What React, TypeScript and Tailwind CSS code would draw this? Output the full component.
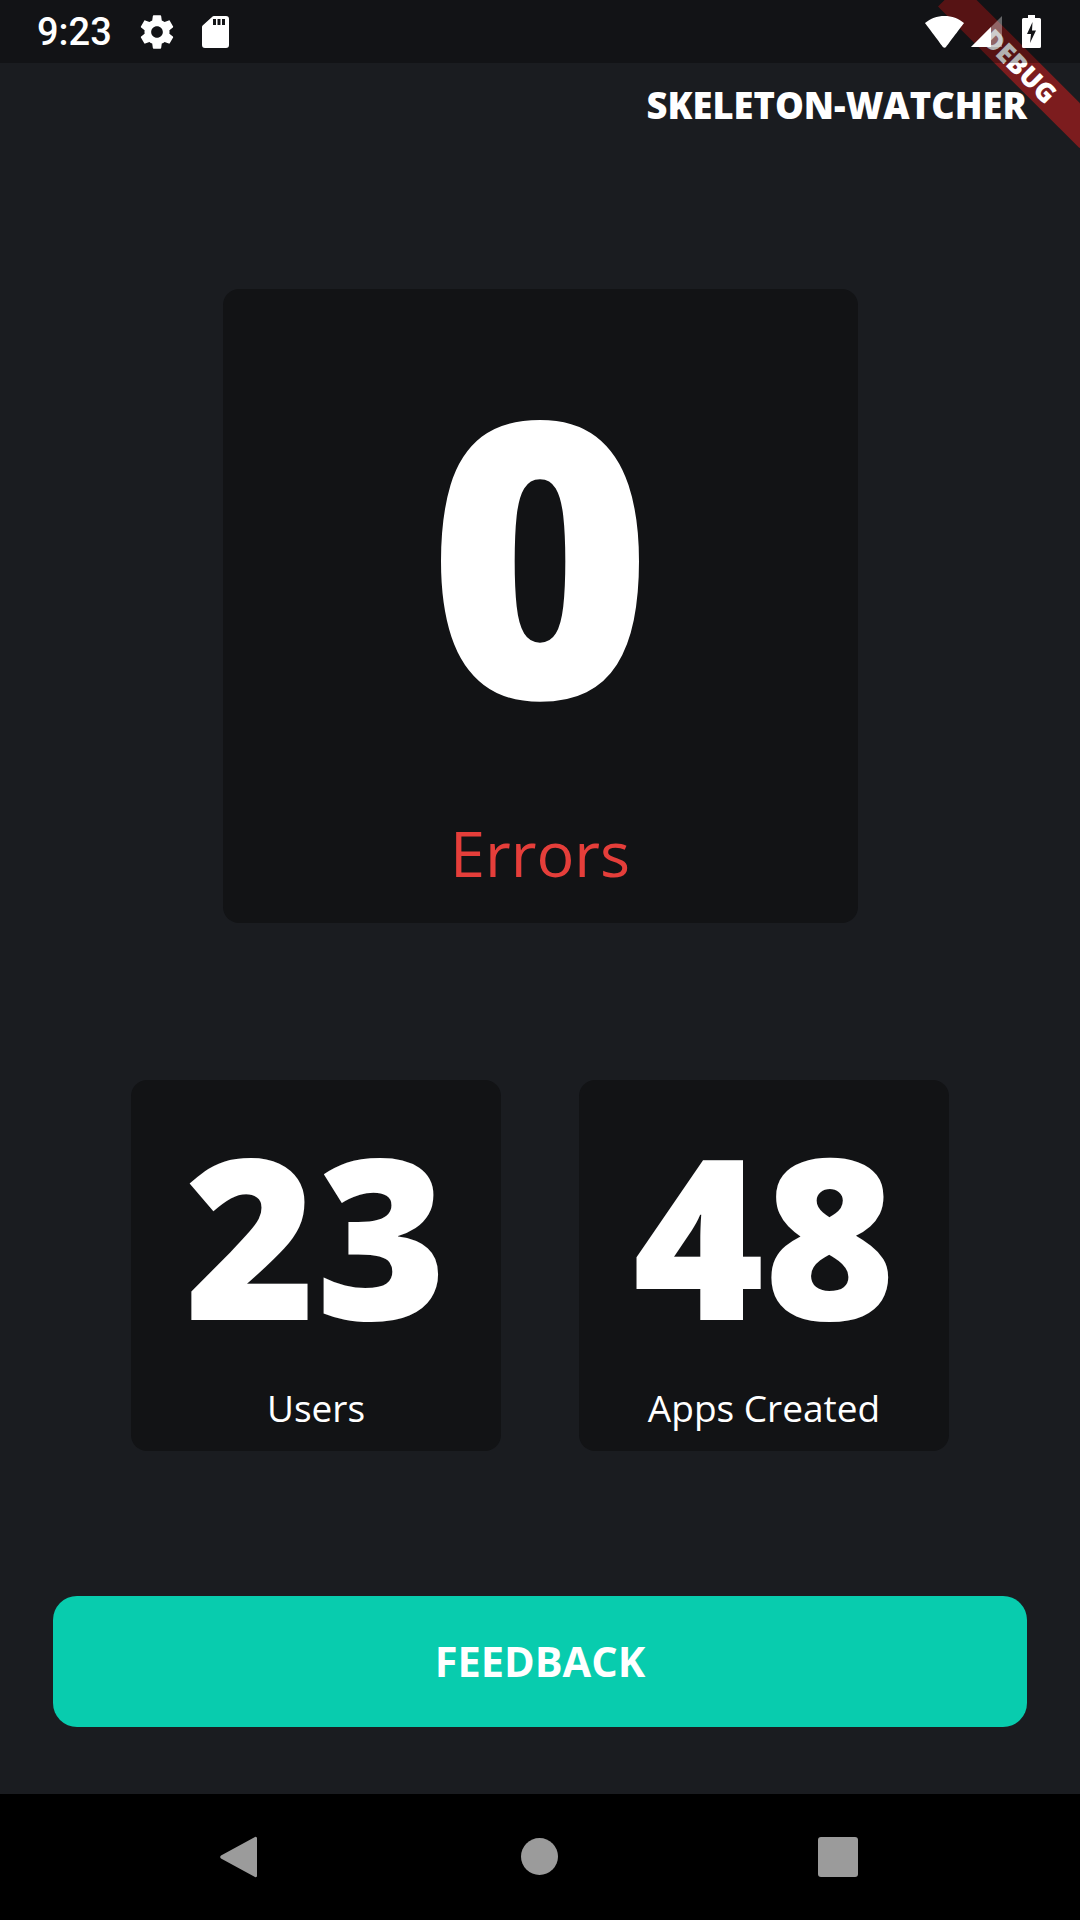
import React from "react";

const font = "font-['Open_Sans',sans-serif]";

function Stat({ value, label }: { value: string; label: string }) {
  return (
    <div className="w-[370px] h-[371px] rounded-[16px] bg-[#121315] flex flex-col items-center">
      <div className="h-[303px] pt-[5px] flex items-center justify-center text-white font-extrabold text-[224px] leading-none">{value}</div>
      <div className="text-white text-[37px] leading-[50px]">{label}</div>
    </div>
  );
}

export default function App() {
  return (
    <div className={`relative w-[1080px] h-[1920px] overflow-hidden bg-[#1a1c20] flex flex-col ${font}`}>
      <div className="relative z-10 h-[63px] shrink-0 bg-black/30 flex items-center justify-between pl-[37px] pr-[39px]">
        <div className="flex items-center">
          <span className="text-white text-[38px] font-medium leading-none font-['Roboto',sans-serif] w-[83px]">9:23</span>
          <svg className="ml-[17px]" width="40" height="40" viewBox="0 0 24 24" fill="#fff">
            <path fillRule="evenodd" d="M19.43 12.98c.04-.32.07-.64.07-.98s-.03-.66-.07-.98l2.11-1.65c.19-.15.24-.42.12-.64l-2-3.46c-.12-.22-.39-.3-.61-.22l-2.49 1c-.52-.4-1.08-.73-1.69-.98l-.38-2.65C14.46 2.18 14.25 2 14 2h-4c-.25 0-.46.18-.49.42l-.38 2.65c-.61.25-1.17.59-1.69.98l-2.49-1c-.23-.09-.49 0-.61.22l-2 3.46c-.13.22-.07.49.12.64l2.11 1.65c-.04.32-.07.65-.07.98s.03.66.07.98l-2.11 1.65c-.19.15-.24.42-.12.64l2 3.46c.12.22.39.3.61.22l2.49-1c.52.4 1.08.73 1.69.98l.38 2.65c.03.24.24.42.49.42h4c.25 0 .46-.18.49-.42l.38-2.65c.61-.25 1.17-.59 1.69-.98l2.49 1c.23.09.49 0 .61-.22l2-3.46c.12-.22.07-.49-.12-.64l-2.11-1.65zM12 15.5c-1.93 0-3.5-1.57-3.5-3.5s1.57-3.5 3.5-3.5 3.500 1.57 3.500 3.500-1.570 3.500-3.500 3.500z" />
          </svg>
          <svg className="ml-[25px]" width="27" height="32" viewBox="0 0 27 32" fill="#fff">
            <path fillRule="evenodd" d="M12 0H24a3 3 0 0 1 3 3V29a3 3 0 0 1-3 3H3a3 3 0 0 1-3-3V11a2 2 0 0 1 .6-1.400L10 1a3 3 0 0 1 2-1ZM11 3v6h3V3ZM15.500 3v6h3V3ZM20 3v6h3V3Z" />
          </svg>
        </div>
        <div className="flex items-center">
          <svg width="39" height="32" viewBox="0 0 39 32" fill="#fff">
            <path d="M0 7C5.500 2.500 12 0 19.500 0S33.500 2.500 39 7c-.6.700-17.500 23.500-18 24a1.800 1.800 0 0 1-3 0C17.500 30.500.6 7.700 0 7Z" />
          </svg>
          <svg className="ml-[7px]" width="31" height="31" viewBox="0 0 31 31">
            <path d="M31 0V31H0Z" fill="#fff" fillOpacity="0.35" />
            <path d="M20 11V31H0Z" fill="#fff" />
          </svg>
          <svg className="ml-[20px]" width="19" height="33" viewBox="0 0 19 33">
            <path fillRule="evenodd" fill="#fff" d="M6 0H13V3H17.500a1.500 1.500 0 0 1 1.500 1.500V31.500a1.500 1.500 0 0 1-1.500 1.500H1.500a1.500 1.500 0 0 1-1.500-1.500V4.500a1.500 1.500 0 0 1 1.500-1.500H6ZM10.500 7 5 19H9L8 28 14 15.500H10Z" />
          </svg>
        </div>
      </div>

      <div className="flex-1 flex flex-col items-center">
        <div className="w-full pt-[18px] pr-[53px] text-right text-white font-extrabold text-[36.3px] leading-[48px]">SKELETON-WATCHER</div>
        <div className="mt-[160px] w-[635px] h-[634px] rounded-[16px] bg-[#121315] flex flex-col items-center">
          <div className="h-[520px] pt-[2px] flex items-center justify-center text-white font-extrabold text-[384px] leading-none">0</div>
          <div className="text-[#e53e3a] text-[63px] leading-[88px]">Errors</div>
        </div>
        <div className="mt-[157px] flex gap-[78px]">
          <Stat value="23" label="Users" />
          <Stat value="48" label="Apps Created" />
        </div>
        <button className="mt-[145px] w-[974px] h-[131px] rounded-[24px] bg-[#08ccae] text-white font-bold text-[41.5px] leading-none">FEEDBACK</button>
      </div>

      <div className="h-[126px] shrink-0 bg-black flex items-start pl-[220px] pt-[42px]">
        <svg width="37" height="42" viewBox="0 0 37 42" fill="#9b9b9b">
          <path d="M37 2V40a1.300 1.300 0 0 1-2 1L1 22.500a1.800 1.800 0 0 1 0-3L35 1a1.300 1.300 0 0 1 2 1Z" />
        </svg>
        <svg width="37" height="37" viewBox="0 0 37 37" className="ml-[264px] mt-[2px]"><circle cx="18.500" cy="18.500" r="18.500" fill="#9b9b9b" /></svg>
        <div className="ml-[260px] mt-[1px] w-[40px] h-[40px] rounded-[3px] bg-[#9b9b9b]" />
      </div>

      <div className="absolute top-[50px] right-[-40px] w-[200px] h-[32px] rotate-45 bg-[#b71c1ca0] flex items-center justify-center text-white font-extrabold text-[26.5px] leading-none">
        <span>DEBUG</span>
      </div>
    </div>
  );
}
